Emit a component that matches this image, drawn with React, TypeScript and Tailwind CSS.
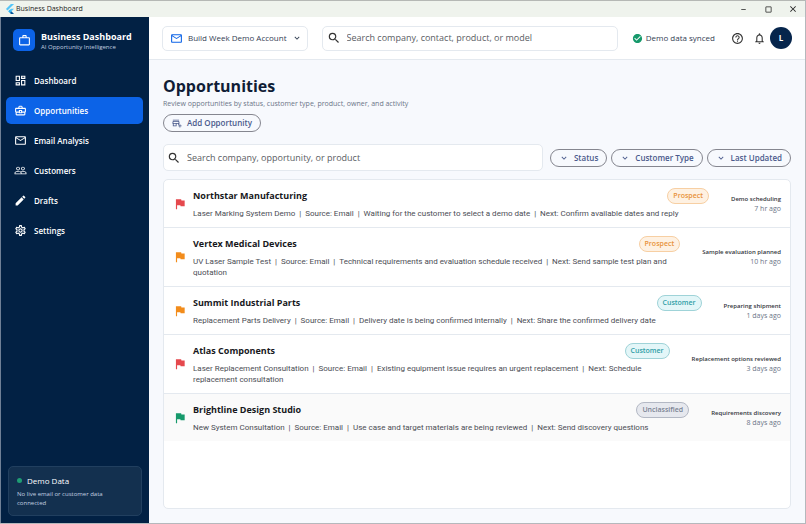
import {
  MdCheckCircle,
  MdClose,
  MdCropSquare,
  MdEdit,
  MdExpandMore,
  MdFlag,
  MdHelpOutline,
  MdMinimize,
  MdNotificationsNone,
  MdOutlineAddBusiness,
  MdOutlineBusinessCenter,
  MdOutlineDashboard,
  MdOutlineMail,
  MdOutlineSettings,
  MdPeopleOutline,
  MdSearch,
  MdWorkOutline,
} from "react-icons/md";

const navItems = [
  { label: "Dashboard", Icon: MdOutlineDashboard },
  { label: "Opportunities", Icon: MdOutlineBusinessCenter, active: true },
  { label: "Email Analysis", Icon: MdOutlineMail },
  { label: "Customers", Icon: MdPeopleOutline },
  { label: "Drafts", Icon: MdEdit },
  { label: "Settings", Icon: MdOutlineSettings },
];

const filters = ["Status", "Customer Type", "Last Updated"];

const tagStyles: Record<string, string> = {
  Prospect: "bg-[#fef1e2] border-[#f7cfa3] text-[#e8913a]",
  Customer: "bg-[#e3f6f8] border-[#9fd3d8] text-[#2f9da6]",
  Unclassified: "bg-[#e6e8ee] border-[#b3b8c4] text-[#7b8394]",
};

const opportunities = [
  {
    name: "Northstar Manufacturing",
    flag: "text-[#e5484d]",
    tag: "Prospect",
    parts: ["Laser Marking System Demo", "Source: Email", "Waiting for the customer to select a demo date", "Next: Confirm available dates and reply"],
    status: "Demo scheduling",
    time: "7 hr ago",
  },
  {
    name: "Vertex Medical Devices",
    flag: "text-[#f28c1b]",
    tag: "Prospect",
    parts: ["UV Laser Sample Test", "Source: Email", "Technical requirements and evaluation schedule received", "Next: Send sample test plan and quotation"],
    status: "Sample evaluation planned",
    time: "10 hr ago",
  },
  {
    name: "Summit Industrial Parts",
    flag: "text-[#f28c1b]",
    tag: "Customer",
    parts: ["Replacement Parts Delivery", "Source: Email", "Delivery date is being confirmed internally", "Next: Share the confirmed delivery date"],
    status: "Preparing shipment",
    time: "1 days ago",
  },
  {
    name: "Atlas Components",
    flag: "text-[#e5484d]",
    tag: "Customer",
    parts: ["Laser Replacement Consultation", "Source: Email", "Existing equipment issue requires an urgent replacement", "Next: Schedule replacement consultation"],
    status: "Replacement options reviewed",
    time: "3 days ago",
  },
  {
    name: "Brightline Design Studio",
    flag: "text-[#16996b]",
    tag: "Unclassified",
    parts: ["New System Consultation", "Source: Email", "Use case and target materials are being reviewed", "Next: Send discovery questions"],
    status: "Requirements discovery",
    time: "8 days ago",
    hovered: true,
  },
];

const FlutterLogo = () => (
  <svg viewBox="0 0 24 24" className="size-[10px]" aria-hidden="true">
    <path fill="#54c5f8" d="M14.3 0 2.3 12l3.7 3.7L21.7 0z" />
    <path fill="#54c5f8" d="M14.3 11.1 7.9 17.5l3.7 3.7 10.1-10.1z" />
    <path fill="#01579b" d="m11.6 21.2 2.7 2.8h7.4l-6.4-6.5z" />
    <path fill="#29b6f6" d="m7.9 17.5 3.7-3.7 3.7 3.7-3.7 3.7z" />
  </svg>
);

const TitleBar = () => (
  <div className="flex h-[17px] items-center justify-between border-t border-[#b5b8b5] bg-[#eff3ed] pl-[5px] text-[#222]">
    <div className="flex items-center gap-[1px]">
      <FlutterLogo />
      <span className="text-[7px] leading-[10px]">Business Dashboard</span>
    </div>
    <div className="flex items-center gap-[15px] pr-[7px]">
      <button aria-label="Minimize" className="flex w-[10px] justify-center">
        <MdMinimize className="mb-[6px] size-[9px]" />
      </button>
      <button aria-label="Maximize" className="flex w-[10px] justify-center">
        <MdCropSquare className="size-[9px]" />
      </button>
      <button aria-label="Close" className="flex w-[10px] justify-center">
        <MdClose className="size-[10px]" />
      </button>
    </div>
  </div>
);

const Sidebar = () => (
  <aside className="flex w-[149px] shrink-0 flex-col border-l border-[#6f8096] bg-[#022144] text-white">
    <div className="flex items-center gap-[6px] pt-[12px] pl-[12px]">
      <div className="flex size-[22px] items-center justify-center rounded-[5px] bg-[#0c63e7]">
        <MdWorkOutline className="size-[13px]" />
      </div>
      <div>
        <div className="text-[9px] leading-[13px] font-bold">Business Dashboard</div>
        <div className="text-[6px] leading-[8px] text-[#c3d0e0]">AI Opportunity Intelligence</div>
      </div>
    </div>
    <nav className="mt-[16px] flex flex-col gap-[3px] pr-[6px] pl-[5px]">
      {navItems.map(({ label, Icon, active }) => (
        <a
          key={label}
          href="#"
          className={`flex h-[27px] items-center gap-[7px] rounded-[5px] pl-[8px] text-[8px] font-semibold ${active ? "bg-[#0c63e7]" : ""}`}
        >
          <Icon className="size-[13px]" />
          {label}
        </a>
      ))}
    </nav>
    <div className="mx-[7px] mt-auto mb-[7px] rounded-[5px] border border-[#213f5f] bg-[#13304f] px-[8px] py-[7px]">
      <div className="flex items-center gap-[5px] text-[8px] leading-[13px]">
        <span className="size-[5px] rounded-full bg-[#1f9d74]" />
        Demo Data
      </div>
      <p className="mt-[3px] pr-[20px] text-[6px] leading-[9px] text-[#c3d0e0]">No live email or customer data connected</p>
    </div>
  </aside>
);

const Header = () => (
  <header className="flex h-[43px] items-center border-b border-[#e4e9ef] bg-white pr-[13px] pl-[13px]">
    <button className="flex h-[25px] items-center rounded-[5px] border border-[#e4e9ef] pr-[5px] pl-[7px] text-[8px] text-[#344054]">
      <MdOutlineMail className="mr-[5px] size-[13px] text-[#0c63e7]" />
      Build Week Demo Account
      <MdExpandMore className="ml-[5px] size-[10px]" />
    </button>
    <label className="ml-[14px] flex h-[25px] flex-1 items-center gap-[6px] rounded-[5px] border border-[#e4e9ef] pl-[4px]">
      <MdSearch className="size-[14px] shrink-0 text-[#333]" />
      <input
        type="text"
        aria-label="Search"
        placeholder="Search company, contact, product, or model"
        className="w-full min-w-0 text-[9px] outline-none placeholder:text-[#5a5d63]"
      />
    </label>
    <div className="ml-[14px] flex items-center gap-[3px] text-[8px] text-[#344054]">
      <MdCheckCircle className="size-[11px] text-[#16996b]" />
      Demo data synced
    </div>
    <button aria-label="Help" className="ml-[16px]">
      <MdHelpOutline className="size-[13px] text-[#333]" />
    </button>
    <button aria-label="Notifications" className="ml-[9px]">
      <MdNotificationsNone className="size-[13px] text-[#333]" />
    </button>
    <button className="ml-[4px] size-[22px] rounded-full bg-[#06254c] text-[8px] font-bold text-white">L</button>
  </header>
);

const App = () => {
  return (
    <div className="flex min-h-screen flex-col border-r border-b border-[#b5b8bc] bg-[#f7f9fd] font-['Open_Sans','Noto_Sans',sans-serif]">
      <TitleBar />
      <div className="flex flex-1">
        <Sidebar />
        <div className="flex min-w-0 flex-1 flex-col">
          <Header />
          <main className="flex flex-1 flex-col px-[14px] pt-[15px] pb-[14px]">
            <h1 className="text-[16px] leading-[23px] font-bold text-[#101d36]">Opportunities</h1>
            <p className="text-[7px] leading-[11px] text-[#6b7588]">
              Review opportunities by status, customer type, product, owner, and activity
            </p>
            <button className="mt-[5px] flex h-[18px] items-center gap-[5px] self-start rounded-full border border-[#85868f] px-[8px] text-[8px] font-semibold text-[#4a5a8c]">
              <MdOutlineAddBusiness className="size-[10px]" />
              Add Opportunity
            </button>
            <div className="mt-[12px] flex items-center gap-[4px]">
              <label className="flex h-[27px] flex-1 items-center gap-[6px] rounded-[5px] border border-[#e4e9ef] bg-white pl-[3px]">
                <MdSearch className="size-[14px] shrink-0 text-[#333]" />
                <input
                  type="text"
                  aria-label="Search opportunities"
                  placeholder="Search company, opportunity, or product"
                  className="w-full min-w-0 text-[9px] outline-none placeholder:text-[#5a5d63]"
                />
              </label>
              {filters.map((filter) => (
                <button
                  key={filter}
                  className="flex h-[18px] items-center gap-[5px] rounded-full border border-[#85868f] px-[8px] text-[8px] font-semibold text-[#4a5a8c] first-of-type:ml-[3px]"
                >
                  <MdExpandMore className="size-[10px]" />
                  {filter}
                </button>
              ))}
            </div>
            <div className="mt-[8px] flex-1 overflow-hidden rounded-[5px] border border-[#e4e9ef] bg-white">
              {opportunities.map((item) => (
                <div
                  key={item.name}
                  className={`flex items-center border-b border-[#e4e9ef] pt-[8px] pr-[9px] pb-[8px] pl-[9px] last:border-b-0 ${item.hovered ? "bg-[#fafafa]" : ""}`}
                >
                  <MdFlag className={`mr-[6px] size-[14px] shrink-0 ${item.flag}`} />
                  <div className="min-w-0 flex-1">
                    <div className="flex items-center justify-between">
                      <h2 className="text-[9px] leading-[16px] font-bold text-[#17181c]">{item.name}</h2>
                      <span className={`flex h-[16px] items-center rounded-full border px-[5px] text-[7px] font-semibold ${tagStyles[item.tag]}`}>
                        {item.tag}
                      </span>
                    </div>
                    <p className="mt-[4px] font-[Roboto,sans-serif] text-[8px] leading-[11px] text-[#4b4d55]">
                      {item.parts.join("\u00a0 | \u00a0")}
                    </p>
                  </div>
                  <div className="ml-[22px] shrink-0 text-right leading-[9px]">
                    <div className="text-[6px] font-semibold text-[#33363d]">{item.status}</div>
                    <div className="text-[7px] text-[#6b7588]">{item.time}</div>
                  </div>
                </div>
              ))}
            </div>
          </main>
        </div>
      </div>
    </div>
  );
};

export default App;
